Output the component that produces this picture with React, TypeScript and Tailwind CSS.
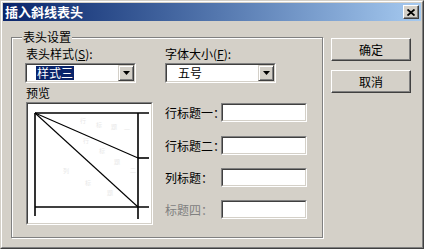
const font = { fontFamily: '"Noto Sans CJK SC", "Liberation Sans", sans-serif' };

function Sunken({ className = "", children }: { className?: string; children?: React.ReactNode }) {
  return (
    <div className={`border border-t-[#808080] border-l-[#808080] border-r-white border-b-white ${className}`}>
      <div className="h-full w-full border border-t-[#404040] border-l-[#404040] border-r-[#d4d0c8] border-b-[#d4d0c8] bg-white">
        {children}
      </div>
    </div>
  );
}

function Combo({ text, selected }: { text: string; selected?: boolean }) {
  return (
    <Sunken className="h-[20px] w-[111px]">
      <div className="flex h-full items-center justify-between">
        <span
          className={`ml-[9px] px-[1px] text-[12px] leading-[14px] ${selected ? "bg-[#0a246a] text-white" : "ml-[10px] text-black"}`}
        >
          {text}
        </span>
        <div className="flex h-[16px] w-[16px] items-center justify-center border border-t-[#d4d0c8] border-l-[#d4d0c8] border-r-[#404040] border-b-[#404040] bg-[#d4d0c8] shadow-[inset_1px_1px_0_white,inset_-1px_-1px_0_#808080]">
          <svg width="7" height="4" viewBox="0 0 7 4">
            <path d="M0 0H7L3.5 4Z" fill="black" />
          </svg>
        </div>
      </div>
    </Sunken>
  );
}

function Button({ label }: { label: string }) {
  return (
    <div className="flex h-[23px] w-[80px] items-center justify-center border border-t-white border-l-white border-r-[#404040] border-b-[#404040] shadow-[inset_-1px_-1px_0_#808080] text-[12px] text-black">
      {label}
    </div>
  );
}

function Row({ label, disabled, className = "" }: { label: string; disabled?: boolean; className?: string }) {
  return (
    <div className={`flex items-center ${className}`}>
      <span
        className={`relative z-10 w-[56px] shrink-0 whitespace-nowrap text-[12px] leading-[14px] ${disabled ? "text-[#808080]" : "text-black"}`}
      >
        {label}
      </span>
      <Sunken className="h-[19px] w-[86px] shrink-0" />
    </div>
  );
}

function Preview() {
  const faint = [
    [52, 19, "行"], [68, 23, "标"], [83, 25, "题"], [96, 28, "一"],
    [55, 39, "行"], [71, 49, "标"], [86, 60, "题"], [102, 68, "二"],
    [35, 69, "列"], [57, 81, "标"], [79, 91, "题"],
  ] as const;
  return (
    <Sunken className="ml-[1px] mt-[2px] h-[123px] w-[127px]">
      <svg width="123" height="119" viewBox="0 0 123 119">
        {faint.map(([x, y, t], i) => (
          <text key={i} x={x} y={y} fontSize="6" fill="#e8e8e8" style={font}>
            {t}
          </text>
        ))}
        <g stroke="black" strokeWidth="1.6" fill="none">
          <line x1="7" y1="9" x2="121" y2="9" />
          <line x1="7" y1="9" x2="7" y2="112" />
          <line x1="110" y1="9" x2="110" y2="115" />
          <line x1="7" y1="103" x2="121" y2="103" />
          <line x1="110" y1="54" x2="121" y2="54" />
        </g>
        <g stroke="black" strokeWidth="1.1">
          <line x1="7" y1="9" x2="110" y2="54" />
          <line x1="7" y1="9" x2="110" y2="103" />
        </g>
      </svg>
    </Sunken>
  );
}

export default function App() {
  return (
    <div
      style={font}
      className="h-[249px] w-[424px] border border-t-[#d4d0c8] border-l-[#d4d0c8] border-r-[#404040] border-b-[#404040] bg-[#d4d0c8]"
    >
      <div className="flex h-full flex-col border border-t-white border-l-white border-r-[#808080] border-b-[#808080] p-[1px]">
        <div className="flex h-[18px] items-center justify-between bg-gradient-to-r from-[#0a246a] to-[#a6caf0] pl-[2px] pr-[2px]">
          <span className="text-[13px] font-bold leading-[16px] text-white">插入斜线表头</span>
          <div className="flex h-[14px] w-[16px] items-center justify-center border border-t-white border-l-white border-r-[#404040] border-b-[#404040] bg-[#d4d0c8] shadow-[inset_-1px_-1px_0_#808080]">
            <svg width="8" height="7" viewBox="0 0 8 7">
              <path d="M0.5 0.5L7.5 6.5M7.5 0.5L0.5 6.5" stroke="black" strokeWidth="1.8" />
            </svg>
          </div>
        </div>

        <div className="flex pl-[8px] pt-[16px]">
          <div className="relative h-[201px] w-[312px] border border-[#808080] shadow-[inset_1px_1px_0_white,1px_1px_0_white]">
            <span className="absolute left-[10px] top-[-9px] bg-[#d4d0c8] px-[1px] text-[12px] leading-[16px] text-black">
              表头设置
            </span>
            <div className="flex pt-[9px]">
              <div className="flex w-[153px] flex-col pl-[13px]">
                <span className="pl-[1px] text-[12px] leading-[14px] text-black">
                  表头样式(<span className="underline">S</span>):
                </span>
                <div className="mt-[2px]">
                  <Combo text="样式三" selected />
                </div>
                <span className="mt-[3px] pl-[1px] text-[12px] leading-[14px] text-black">预览</span>
                <Preview />
              </div>
              <div className="flex flex-col">
                <span className="text-[12px] leading-[14px] text-black">
                  字体大小(<span className="underline">F</span>):
                </span>
                <div className="mt-[2px]">
                  <Combo text="五号" />
                </div>
                <Row label="行标题一：" className="mt-[20px]" />
                <Row label="行标题二：" className="mt-[14px]" />
                <Row label="列标题：" className="mt-[13px]" />
                <Row label="标题四：" disabled className="mt-[13px]" />
              </div>
            </div>
          </div>
          <div className="ml-[8px] mt-[1px] flex flex-col gap-[9px]">
            <Button label="确定" />
            <Button label="取消" />
          </div>
        </div>
      </div>
    </div>
  );
}
